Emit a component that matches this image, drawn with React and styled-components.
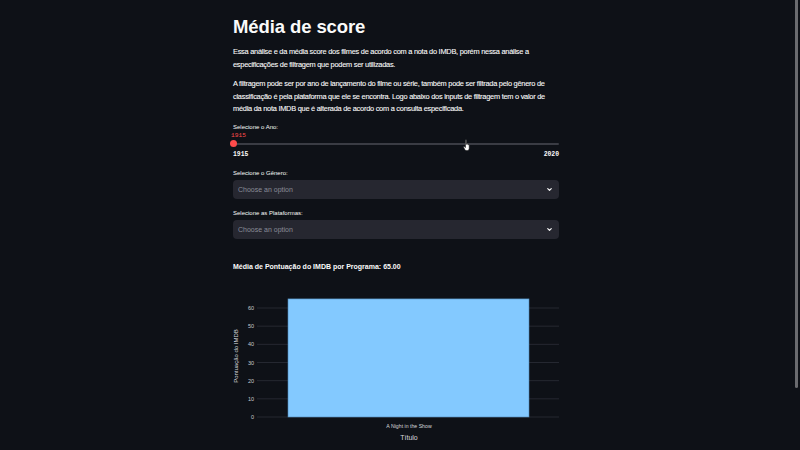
import styled, { createGlobalStyle } from "styled-components";

const GlobalStyle = createGlobalStyle`
  html, body {
    margin: 0;
    padding: 0;
    background: #0e1117;
    overflow: hidden;
  }
  body {
    font-family: "Liberation Sans", "Noto Sans", sans-serif;
    color: #fafafa;
  }
`;

const Main = styled.main`
  position: relative;
  width: 326px;
  margin: 0 auto;
  padding: 14px 0 0;
  transform: translateX(-4px);
`;

const Title = styled.h1`
  margin: 0 0 6px;
  font-size: 18.5px;
  font-weight: 700;
  line-height: 26px;
  letter-spacing: -0.1px;
`;

const Paragraph = styled.p`
  margin: 0 0 7px;
  font-size: 7.4px;
  line-height: 12.5px;
  letter-spacing: -0.25px;
  -webkit-text-stroke: 0.1px #fafafa;
`;

const Label = styled.div`
  font-size: 6px;
  line-height: 9px;
  color: #fafafa;
  margin-top: ${(p) => p.$top || 0}px;
`;

const SliderBox = styled.div`
  position: relative;
`;

const SliderValue = styled.div`
  font-family: "Liberation Mono", "DejaVu Sans Mono", monospace;
  font-size: 6.2px;
  line-height: 8px;
  color: #ff4b4b;
  margin: 0 0 3px -2px;
`;

const Track = styled.div`
  position: relative;
  height: 2px;
  background: #3a3c44;
  border-radius: 1px;
`;

const Thumb = styled.span`
  position: absolute;
  left: -3px;
  top: -2.5px;
  width: 7px;
  height: 7px;
  border-radius: 50%;
  background: #ff4b4b;
`;

const Ticks = styled.div`
  display: flex;
  justify-content: space-between;
  margin-top: 5px;
  font-family: "Liberation Mono", "DejaVu Sans Mono", monospace;
  font-size: 6.4px;
  font-weight: 700;
  line-height: 9px;
  color: #fafafa;
`;

const Select = styled.div`
  display: flex;
  align-items: center;
  justify-content: space-between;
  height: 19px;
  margin-top: 2px;
  padding: 0 6px 0 5px;
  background: #262730;
  border-radius: 4px;
  font-size: 7px;
  color: #8a8c97;
`;

const Chevron = styled.svg`
  width: 7px;
  height: 7px;
  color: #fafafa;
`;

const ChartTitle = styled.div`
  margin-top: 23px;
  font-size: 7px;
  font-weight: 700;
  line-height: 10px;
`;

const ChartSvg = styled.svg`
  display: block;
  margin-left: -4px;
  overflow: visible;
`;

const Cursor = styled.svg`
  position: absolute;
  left: 230px;
  top: 139px;
  width: 9px;
  height: 13px;
`;

const ScrollThumb = styled.div`
  position: fixed;
  top: 0;
  right: 2px;
  width: 3px;
  height: 388px;
  background: #6a6b6f;
  border-radius: 0 0 2px 2px;
`;

function ChevronDown() {
  return (
    <Chevron viewBox="0 0 24 24" fill="none" stroke="currentColor" strokeWidth="4" strokeLinecap="round" strokeLinejoin="round">
      <polyline points="6 9 12 15 18 9" />
    </Chevron>
  );
}

function HandCursor() {
  return (
    <Cursor viewBox="0 0 9 13">
      <path
        d="M2.5 1.2c0-.5.9-.5.9 0v4.3l.1-.9c.1-.5.9-.5.9 0v.8c.1-.5.9-.5.9 0v.7c.1-.5.9-.5.9 0v3.2c0 1.4-.9 2.3-2.2 2.3H3.5c-.8 0-1.3-.4-1.700-1L.6 8.2c-.3-.5.2-1 .7-.6l1.2 1z"
        fill="#ffffff"
        stroke="#111"
        strokeWidth="0.5"
        strokeLinejoin="round"
      />
    </Cursor>
  );
}

function BarChart() {
  // page coords: svg origin at x=229, y=271
  const ox = 229;
  const oy = 271;
  const y0 = 416 - oy;
  const unit = 109 / 60;
  const ticks = [0, 10, 20, 30, 40, 50, 60];
  const barTop = y0 - 65 * unit;
  return (
    <ChartSvg width="330" height="172" viewBox="0 0 330 172">
      {ticks.map((t) => {
        const y = y0 - t * unit;
        return (
          <g key={t}>
            <line x1={257 - ox} x2={559 - ox} y1={y} y2={y} stroke="#2c2f38" strokeWidth="0.8" />
            <text x={254 - ox} y={y + 2} textAnchor="end" fontSize="5.5" fill="#c9cad0" fontFamily="Liberation Sans, sans-serif">
              {t}
            </text>
          </g>
        );
      })}
      <rect x={288 - ox} y={barTop} width={241} height={y0 - barTop} fill="#83c9ff" stroke="#4e88b5" strokeWidth="0.6" />
      <text
        transform={`translate(${238 - ox}, ${355 - oy}) rotate(-90)`}
        textAnchor="middle"
        fontSize="6"
        fill="#d6d7dc"
        fontFamily="Liberation Sans, sans-serif"
      >
        Pontuação do IMDB
      </text>
      <text x={409 - ox} y={427 - oy} textAnchor="middle" fontSize="5.2" fill="#d6d7dc" fontFamily="Liberation Sans, sans-serif">
        A Night in the Show
      </text>
      <text x={409 - ox} y={439 - oy} textAnchor="middle" fontSize="7" fill="#d6d7dc" fontFamily="Liberation Sans, sans-serif">
        Título
      </text>
    </ChartSvg>
  );
}

export default function App() {
  return (
    <>
      <GlobalStyle />
      <Main>
        <Title>Média de score</Title>
        <Paragraph>
          Essa análise e da média score dos filmes de acordo com a nota do IMDB, porém nessa análise a
          especificações de filtragem que podem ser utilizadas.
        </Paragraph>
        <Paragraph>
          A filtragem pode ser por ano de lançamento do filme ou série, também pode ser filtrada pelo gênero de
          classificação é pela plataforma que ele se encontra. Logo abaixo dos inputs de filtragem tem o valor de
          média da nota IMDB que é alterada de acordo com a consulta especificada.
        </Paragraph>
        <Label $top={1}>Selecione o Ano:</Label>
        <SliderBox>
          <SliderValue>1915</SliderValue>
          <Track>
            <Thumb />
          </Track>
          <Ticks>
            <span>1915</span>
            <span>2020</span>
          </Ticks>
        </SliderBox>
        <Label $top={10}>Selecione o Gênero:</Label>
        <Select>
          <span>Choose an option</span>
          <ChevronDown />
        </Select>
        <Label $top={10}>Selecione as Plataformas:</Label>
        <Select>
          <span>Choose an option</span>
          <ChevronDown />
        </Select>
        <ChartTitle>Média de Pontuação do IMDB por Programa: 65.00</ChartTitle>
        <BarChart />
        <HandCursor />
      </Main>
      <ScrollThumb />
    </>
  );
}
